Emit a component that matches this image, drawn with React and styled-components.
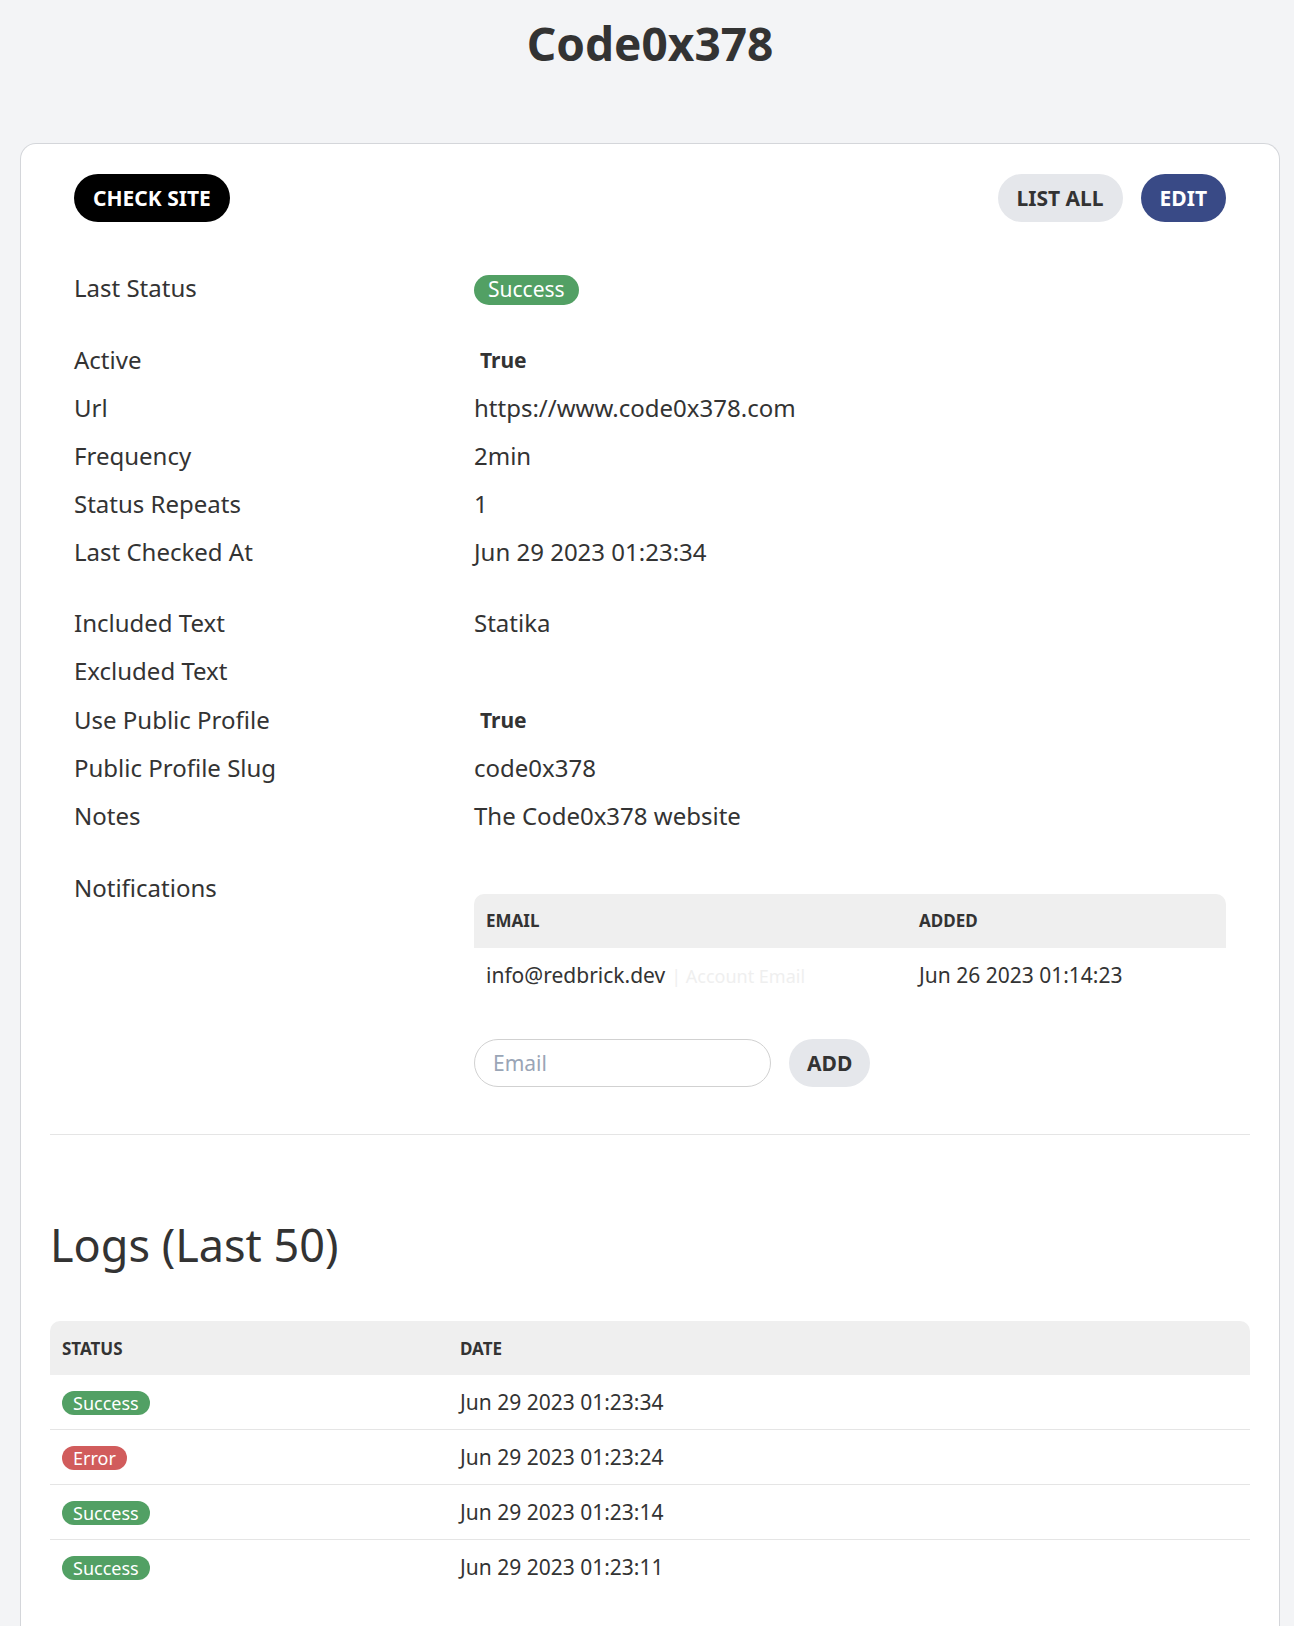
import styled, { createGlobalStyle } from "styled-components";

const GlobalStyle = createGlobalStyle`
  html, body {
    margin: 0;
    padding: 0;
    background: #f3f4f6;
    font-family: "Noto Sans", "Open Sans", sans-serif;
    color: #333333;
  }
  * { box-sizing: border-box; }
`;

const Page = styled.div`
  padding: 12px 14px 0 20px;
`;

const Title = styled.h1`
  margin: 0 0 69px;
  text-align: center;
  font-size: 46px;
  font-weight: 700;
  line-height: normal;
  color: #333333;
`;

const Card = styled.div`
  background: #ffffff;
  border: 1px solid #d4d6da;
  border-bottom: none;
  border-radius: 16px 16px 0 0;
  padding: 30px 29px 60px;
`;

const Info = styled.div`
  padding: 0 24px;
`;

const Toolbar = styled.div`
  display: flex;
  align-items: center;
  justify-content: space-between;
  margin-bottom: 42px;
`;

const ButtonGroup = styled.div`
  display: flex;
  gap: 18px;
`;

const Button = styled.button`
  height: 48px;
  padding: 0 ${(p) => p.$px || 19}px;
  border: none;
  border-radius: 999px;
  font-family: inherit;
  font-size: 21px;
  font-weight: 700;
  text-transform: uppercase;
  cursor: pointer;
  background: ${(p) =>
    p.$variant === "dark" ? "#000000" : p.$variant === "primary" ? "#394a86" : "#e5e7eb"};
  color: ${(p) => (p.$variant === "light" ? "#333333" : "#ffffff")};
`;

const Group = styled.div`
  margin-bottom: ${(p) => p.$gap || 23}px;
`;

const Row = styled.div`
  display: grid;
  grid-template-columns: 400px 1fr;
  align-items: ${(p) => (p.$top ? "start" : "center")};
  min-height: 48px;
  font-size: 24px;
  line-height: 36px;
`;

const Label = styled.div`
  padding: 6px 0;
`;

const Value = styled.div`
  padding: ${(p) => (p.$pt ? `${p.$pt}px 0 0` : "6px 0")};
`;

const Bool = styled.span`
  display: inline-block;
  padding-left: 6px;
  font-size: 21px;
  font-weight: 700;
`;

const Badge = styled.span`
  display: inline-flex;
  align-items: center;
  height: ${(p) => (p.$lg ? 30 : 24)}px;
  padding: 0 ${(p) => (p.$lg ? 14 : 11)}px;
  border-radius: 999px;
  font-size: ${(p) => (p.$lg ? 21 : 18)}px;
  line-height: 1;
  color: #ffffff;
  background: ${(p) => (p.$kind === "error" ? "#d15c5c" : "#52a064")};
`;

const Table = styled.table`
  width: 100%;
  border-collapse: separate;
  border-spacing: 0;
  font-size: 21px;
  color: #333333;
`;

const Th = styled.th`
  height: 54px;
  padding: 0 12px;
  text-align: left;
  font-size: 17px;
  font-weight: 700;
  text-transform: uppercase;
  background: #efefef;
  width: ${(p) => p.$w || "auto"};
  &:first-child { border-top-left-radius: 10px; }
  &:last-child { border-top-right-radius: 10px; }
`;

const Td = styled.td`
  height: ${(p) => (p.$lined ? 55 : 54)}px;
  padding: 0 12px;
  border-bottom: ${(p) => (p.$lined ? "1px solid #e5e5e5" : "none")};
`;

const Muted = styled.span`
  font-size: 18px;
  color: #efefef;
  margin-left: 6px;
`;

const AddForm = styled.form`
  display: flex;
  gap: 18px;
  margin-top: 37px;
`;

const EmailInput = styled.input`
  width: 297px;
  height: 48px;
  padding: 0 18px;
  border: 1px solid #d1d1d1;
  border-radius: 999px;
  font-family: inherit;
  font-size: 21px;
  color: #333333;
  outline: none;
  &::placeholder { color: #9aa5b6; }
`;

const Divider = styled.hr`
  margin: 47px 0 0;
  border: none;
  border-top: 1px solid #e5e5e5;
`;

const LogsTitle = styled.h2`
  margin: 79px 0 46px 0;
  font-size: 45px;
  font-weight: 400;
  line-height: normal;
`;

const logs = [
  { status: "Success", date: "Jun 29 2023 01:23:34" },
  { status: "Error", date: "Jun 29 2023 01:23:24" },
  { status: "Success", date: "Jun 29 2023 01:23:14" },
  { status: "Success", date: "Jun 29 2023 01:23:11" },
];

export default function App() {
  return (
    <Page>
      <GlobalStyle />
      <Title>Code0x378</Title>
      <Card>
        <Info>
          <Toolbar>
            <Button $variant="dark">Check Site</Button>
            <ButtonGroup>
              <Button $variant="light">List All</Button>
              <Button $variant="primary">Edit</Button>
            </ButtonGroup>
          </Toolbar>

          <Group>
            <Row>
              <Label>Last Status</Label>
              <Value>
                <Badge $lg>Success</Badge>
              </Value>
            </Row>
          </Group>

          <Group>
            <Row>
              <Label>Active</Label>
              <Value><Bool>True</Bool></Value>
            </Row>
            <Row>
              <Label>Url</Label>
              <Value>https://www.code0x378.com</Value>
            </Row>
            <Row>
              <Label>Frequency</Label>
              <Value>2min</Value>
            </Row>
            <Row>
              <Label>Status Repeats</Label>
              <Value>1</Value>
            </Row>
            <Row>
              <Label>Last Checked At</Label>
              <Value>Jun 29 2023 01:23:34</Value>
            </Row>
          </Group>

          <Group $gap={24}>
            <Row>
              <Label>Included Text</Label>
              <Value>Statika</Value>
            </Row>
            <Row>
              <Label>Excluded Text</Label>
              <Value></Value>
            </Row>
            <Row>
              <Label>Use Public Profile</Label>
              <Value><Bool>True</Bool></Value>
            </Row>
            <Row>
              <Label>Public Profile Slug</Label>
              <Value>code0x378</Value>
            </Row>
            <Row>
              <Label>Notes</Label>
              <Value>The Code0x378 website</Value>
            </Row>
          </Group>

          <Row $top>
            <Label>Notifications</Label>
            <Value $pt={30}>
              <Table>
                <thead>
                  <tr>
                    <Th $w="433px">Email</Th>
                    <Th>Added</Th>
                  </tr>
                </thead>
                <tbody>
                  <tr>
                    <Td>
                      info@redbrick.dev<Muted>| Account Email</Muted>
                    </Td>
                    <Td>Jun 26 2023 01:14:23</Td>
                  </tr>
                </tbody>
              </Table>
              <AddForm onSubmit={(e) => e.preventDefault()}>
                <EmailInput type="email" placeholder="Email" />
                <Button $variant="light" $px={18}>Add</Button>
              </AddForm>
            </Value>
          </Row>
        </Info>

        <Divider />

        <LogsTitle>Logs (Last 50)</LogsTitle>
        <Table>
          <thead>
            <tr>
              <Th $w="398px">Status</Th>
              <Th>Date</Th>
            </tr>
          </thead>
          <tbody>
            {logs.map((log, i) => (
              <tr key={i}>
                <Td $lined={i < logs.length - 1}>
                  <Badge $kind={log.status === "Error" ? "error" : "success"}>
                    {log.status}
                  </Badge>
                </Td>
                <Td $lined={i < logs.length - 1}>{log.date}</Td>
              </tr>
            ))}
          </tbody>
        </Table>
      </Card>
    </Page>
  );
}
